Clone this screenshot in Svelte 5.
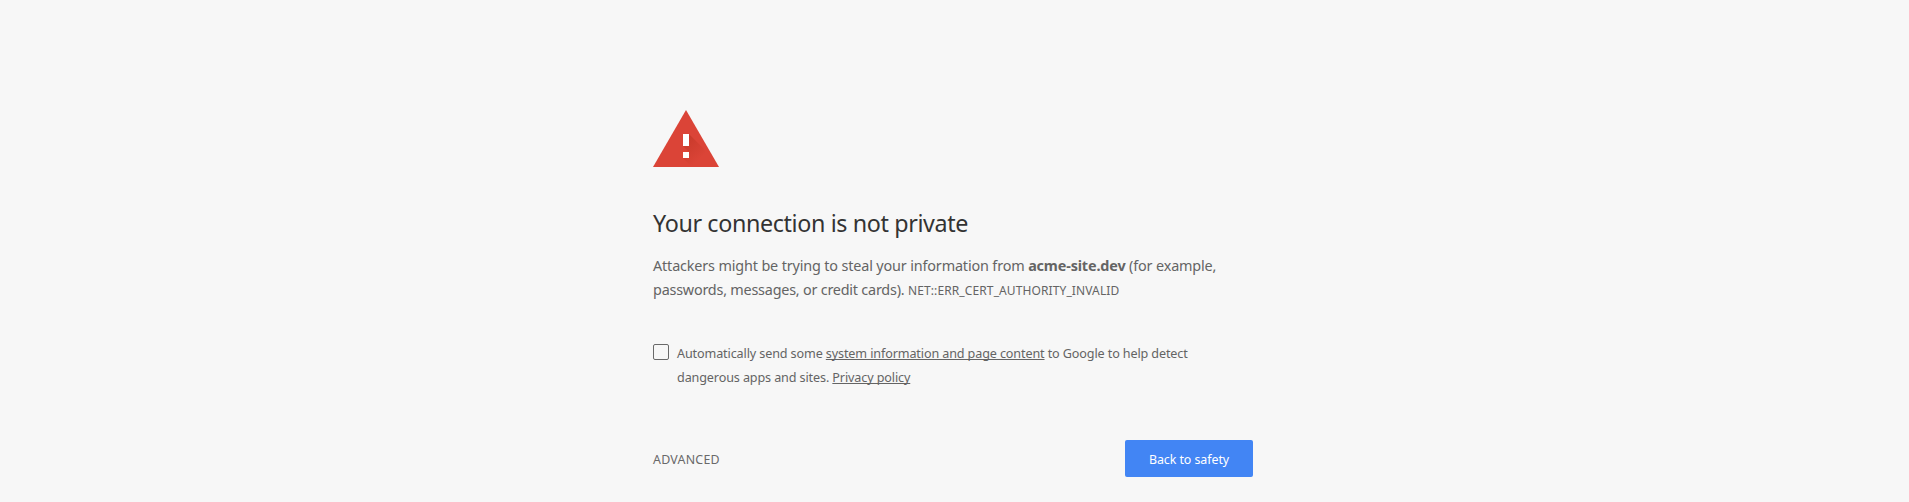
<script lang="ts">
  const host = 'acme-site.dev';
  const errorCode = 'NET::ERR_CERT_AUTHORITY_INVALID';
  let reporting = $state(false);
</script>

<main class="interstitial">
  <svg class="icon" width="66" height="57" viewBox="0 0 66 57" aria-hidden="true">
    <defs>
      <linearGradient id="shade" x1="30" y1="28" x2="48" y2="48" gradientUnits="userSpaceOnUse">
        <stop offset="0" stop-color="#a52714" stop-opacity="0.38" />
        <stop offset="1" stop-color="#a52714" stop-opacity="0" />
      </linearGradient>
    </defs>
    <path d="M33 0 66 57H0z" fill="#db4437" />
    <path d="M36 24 50 38 61 57H39L30 48 36 42 30 36h6z" fill="url(#shade)" />
    <path d="M30 24h6v12h-6zM30 42h6v6h-6z" fill="#fff" />
  </svg>

  <h1>Your connection is not private</h1>
  <p class="message">
    Attackers might be trying to steal your information from <strong>{host}</strong> (for example,<br />
    <span class="tight">passwords, messages, or credit cards).</span> <span class="code">{errorCode}</span>
  </p>

  <label class="opt-in">
    <input type="checkbox" bind:checked={reporting} />
    <span>
      Automatically send some <a href="#details">system information and page content</a> to Google to help detect<br />
      dangerous apps and sites. <a href="#privacy">Privacy policy</a>
    </span>
  </label>

  <div class="actions">
    <button class="advanced">ADVANCED</button>
    <button class="safety">Back to safety</button>
  </div>
</main>

<style>
  :global(body) {
    background: #f7f7f7;
    overflow: hidden;
  }
  .interstitial {
    box-sizing: border-box;
    width: 600px;
    height: 502px;
    margin-left: 653px;
    padding-top: 110px;
    color: #646464;
    font-family: 'Noto Sans', 'Open Sans', sans-serif;
  }
  .icon {
    display: block;
  }
  h1 {
    margin: 39px 0 0;
    color: #333;
    font-size: 23.3px;
    font-weight: 400;
    line-height: 34px;
    letter-spacing: -0.37px;
    white-space: nowrap;
  }
  .message {
    height: 48px;
    margin: 14px 0 0;
    font-size: 14.4px;
    line-height: 24px;
    letter-spacing: -0.15px;
    white-space: nowrap;
  }
  .tight {
    letter-spacing: -0.22px;
  }
  .code {
    font-size: 12px;
    letter-spacing: 0.11px;
  }
  .opt-in {
    display: flex;
    gap: 8px;
    margin-top: 40px;
    font-size: 12.6px;
    line-height: 24px;
    letter-spacing: -0.12px;
    white-space: nowrap;
  }
  input {
    appearance: none;
    box-sizing: border-box;
    flex: none;
    width: 16px;
    height: 16px;
    margin: 2px 0 0;
    border: 1px solid #696969;
    border-radius: 2px;
  }
  input:checked {
    background: #696969;
  }
  a {
    color: inherit;
    text-underline-offset: 1px;
    text-decoration-thickness: 1px;
    text-decoration-skip-ink: none;
  }
  .actions {
    display: flex;
    align-items: center;
    justify-content: space-between;
    margin-top: 50px;
  }
  button {
    box-sizing: border-box;
    border: 0;
    padding: 2px 0 0;
    font: 12.4px 'Noto Sans', 'Open Sans', sans-serif;
    cursor: pointer;
  }
  .advanced {
    background: none;
    color: #696969;
    letter-spacing: 0.25px;
  }
  .safety {
    width: 128px;
    height: 37px;
    border-radius: 2px;
    background: #4285f4;
    color: #fff;
    letter-spacing: -0.05px;
  }
</style>
